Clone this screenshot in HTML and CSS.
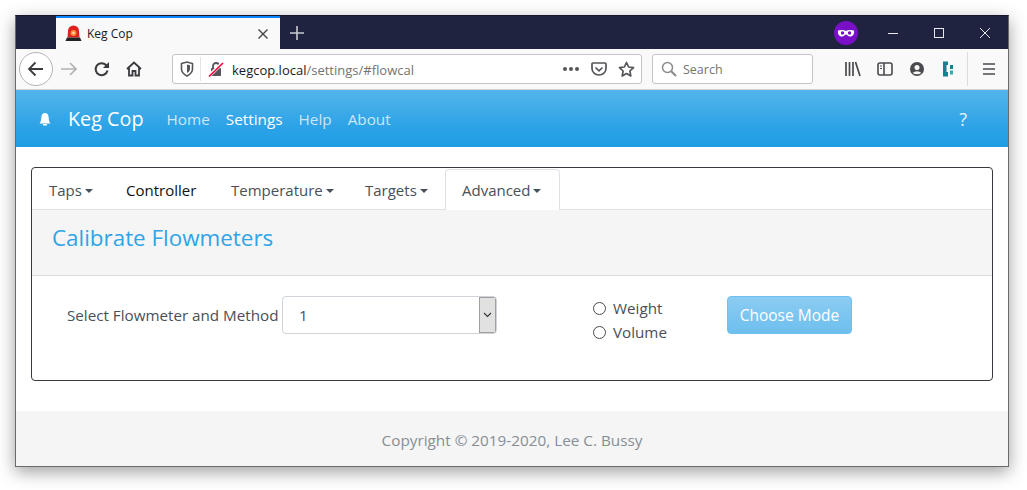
FILE: index.html
```html
<!DOCTYPE html>
<html lang="en">
<head>
  <meta charset="UTF-8">
  <title>Keg Cop</title>
  <link rel="stylesheet" href="styles.css">
</head>
<body>

  <div class="window">

    <div class="tabbar">
      <div class="tab">
        <svg class="tab-icon" width="17" height="17" viewBox="0 0 17 17">
          <path d="M2.500 12.500 L3 6 a5.500 5.500 0 0 1 11 0 L14.500 12.500 Z" fill="#e0201c"/>
          <circle cx="8.500" cy="8" r="3" fill="#ff8a3c"/>
          <circle cx="8.500" cy="8" r="1.300" fill="#ffd8a8"/>
          <path d="M0.500 16 L2 12.500 H15 L16.500 16 Z" fill="#222"/>
        </svg>
        <span class="tab-title">Keg Cop</span>
        <svg class="tab-close" width="12" height="12" viewBox="0 0 12 12">
          <path d="M1.500 1.500 L10.500 10.500 M10.500 1.500 L1.500 10.500" stroke="#444" stroke-width="1.400"/>
        </svg>
      </div>
      <svg class="new-tab" width="14" height="14" viewBox="0 0 14 14">
        <path d="M7 0 V14 M0 7 H14" stroke="#c9cad2" stroke-width="1.600"/>
      </svg>
      <div class="tabbar-right">
        <svg class="mask" width="24" height="24" viewBox="0 0 24 24">
          <circle cx="12" cy="12" r="12" fill="#7a0fc8"/>
          <path d="M4 9.500 C7 8.500 10 9 12 10 C14 9 17 8.500 20 9.500 C20.500 13 19 15.500 16 15.500 C14 15.500 13 13.500 12 13.500 C11 13.500 10 15.500 8 15.500 C5 15.500 3.500 13 4 9.500 Z" fill="#fff"/>
          <circle cx="8.500" cy="12" r="1.700" fill="#7a0fc8"/>
          <circle cx="15.500" cy="12" r="1.700" fill="#7a0fc8"/>
        </svg>
        <div class="win-buttons">
          <svg width="46" height="12" viewBox="0 0 46 12"><path d="M18 6.500 H28" stroke="#e8e8ee"/></svg>
          <svg width="46" height="12" viewBox="0 0 46 12"><rect x="18.500" y="1.500" width="9" height="9" fill="none" stroke="#e8e8ee"/></svg>
          <svg width="46" height="12" viewBox="0 0 46 12"><path d="M18 1 L28 11 M28 1 L18 11" stroke="#e8e8ee"/></svg>
        </div>
      </div>
    </div>

    <div class="toolbar">
      <div class="back-btn">
        <svg width="18" height="18" viewBox="0 0 18 18">
          <path d="M16 9 H2 M8.500 2.500 L2 9 L8.500 15.500" fill="none" stroke="#3b3b3f" stroke-width="1.800"/>
        </svg>
      </div>
      <svg class="tool forward" width="16" height="16" viewBox="0 0 16 16">
        <path d="M0 8 H15 M9 2 L15 8 L9 14" fill="none" stroke="#b1b1b3" stroke-width="1.600"/>
      </svg>
      <svg class="tool reload" width="16" height="16" viewBox="0 0 16 16">
        <path d="M13.500 9.500 A6 6 0 1 1 12 4 L14 6" fill="none" stroke="#3b3b3f" stroke-width="2"/>
        <path d="M15 1 V7 H9 Z" fill="#3b3b3f"/>
      </svg>
      <svg class="tool home" width="16" height="16" viewBox="0 0 16 16">
        <path d="M1 8 L8 1.500 L15 8 M3 6.500 V14.500 H6.500 V10 H9.500 V14.500 H13 V6.500" fill="none" stroke="#3b3b3f" stroke-width="1.800"/>
      </svg>

      <div class="urlbar">
        <svg class="shield" width="14" height="16" viewBox="0 0 14 16">
          <path d="M1.500 2.500 L7 1 L12.500 2.500 V8 C12.500 11.500 10 13.500 7 15 C4 13.500 1.500 11.500 1.500 8 Z" fill="none" stroke="#55555a" stroke-width="1.600"/>
          <path d="M7 3.500 L10 4.300 V8 C10 10 8.500 11.200 7 12 Z" fill="#55555a"/>
        </svg>
        <span class="url-sep"></span>
        <svg class="lock" width="16" height="16" viewBox="0 0 16 16">
          <path d="M5 7 V5 a3 3 0 0 1 6 0 V7" fill="none" stroke="#55555a" stroke-width="1.800"/>
          <rect x="3" y="7" width="10" height="8" rx="1" fill="#55555a"/>
          <path d="M1 15 L14.500 2" stroke="#fff" stroke-width="3.500"/>
          <path d="M1 15.500 L15 2" stroke="#ff0039" stroke-width="1.600"/>
        </svg>
        <span class="url"><span class="url-host">kegcop.local</span>/settings/#flowcal</span>
        <span class="dots">
          <i></i><i></i><i></i>
        </span>
        <svg class="pocket" width="16" height="16" viewBox="0 0 16 16">
          <path d="M1 3 Q1 2 2 2 H14 Q15 2 15 3 V7.500 A7 6.500 0 0 1 1 7.500 Z" fill="none" stroke="#55555a" stroke-width="1.700"/>
          <path d="M4.500 6.500 L8 9.800 L11.500 6.500" fill="none" stroke="#55555a" stroke-width="1.700"/>
        </svg>
        <svg class="star" width="17" height="17" viewBox="0 0 17 17">
          <path d="M8.500 1.500 L10.600 6 L15.500 6.600 L11.900 10 L12.800 15 L8.500 12.500 L4.200 15 L5.100 10 L1.500 6.600 L6.400 6 Z" fill="none" stroke="#55555a" stroke-width="1.700" stroke-linejoin="round"/>
        </svg>
      </div>

      <div class="searchbar">
        <svg width="16" height="16" viewBox="0 0 16 16">
          <circle cx="6.500" cy="6.500" r="5" fill="none" stroke="#8a8a8e" stroke-width="1.500"/>
          <path d="M10.200 10.200 L15 15" stroke="#8a8a8e" stroke-width="2"/>
        </svg>
        <span>Search</span>
      </div>

      <div class="toolbar-right">
        <svg width="16" height="16" viewBox="0 0 16 16">
          <path d="M1 1 V15 M4.500 1 V15 M8 1 V15 M10.500 1 L15 15" fill="none" stroke="#4a4a4f" stroke-width="1.700"/>
        </svg>
        <svg width="16" height="16" viewBox="0 0 16 16">
          <rect x="1" y="2" width="14" height="12" rx="2" fill="none" stroke="#4a4a4f" stroke-width="1.600"/>
          <path d="M7 2 V14" stroke="#4a4a4f" stroke-width="1.600"/>
          <path d="M3 5 H5 M3 7.500 H5" stroke="#4a4a4f"/>
        </svg>
        <svg width="16" height="16" viewBox="0 0 16 16">
          <circle cx="8" cy="8" r="7" fill="#4a4a4f"/>
          <circle cx="8" cy="6.500" r="2.500" fill="#f9f9fa"/>
          <path d="M3.500 12 Q8 8.500 12.500 12 Q8 14.500 3.500 12 Z" fill="#f9f9fa"/>
        </svg>
        <svg width="14" height="16" viewBox="0 0 14 16">
          <path d="M2 0.500 H7 V4 H5.500 V11 H7 V15.500 H2 Z" fill="#1b7f93"/>
          <rect x="9" y="4" width="3" height="4" fill="#1b7f93"/>
          <rect x="9" y="9.500" width="3" height="4" fill="#3aa6ba"/>
        </svg>
        <span class="toolbar-sep"></span>
        <svg width="14" height="14" viewBox="0 0 14 14">
          <path d="M1 2 H13 M1 7 H13 M1 12 H13" stroke="#4a4a4f" stroke-width="1.700"/>
        </svg>
      </div>
    </div>

    <nav class="navbar">
      <svg class="bell" width="12" height="14" viewBox="0 0 12 14">
        <path d="M0.500 11.500 C2 10 2.200 7 2.400 5 C2.600 2.500 4 1 6 1 C8 1 9.400 2.500 9.600 5 C9.800 7 10 10 11.500 11.500 Z" fill="#fff"/>
        <rect x="4" y="12" width="4" height="1.500" fill="#fff"/>
      </svg>
      <a class="brand" href="#">Keg Cop</a>
      <a href="#">Home</a>
      <a class="active" href="#">Settings</a>
      <a href="#">Help</a>
      <a href="#">About</a>
      <a class="help" href="#">?</a>
    </nav>

    <main class="content">
      <div class="card">
        <ul class="tabs">
          <li class="caret">Taps</li>
          <li class="plain">Controller</li>
          <li class="caret">Temperature</li>
          <li class="caret">Targets</li>
          <li class="caret current">Advanced</li>
        </ul>
        <div class="card-header">
          <h4>Calibrate Flowmeters</h4>
        </div>
        <form class="card-body">
          <label class="select-label" for="flowmeter">Select Flowmeter and Method</label>
          <div class="select-box" id="flowmeter">
            <span>1</span>
            <span class="select-arrow">
              <svg width="9" height="6" viewBox="0 0 9 6"><path d="M1 1 L4.500 4.500 L8 1" fill="none" stroke="#333" stroke-width="1.100"/></svg>
            </span>
          </div>
          <div class="radios">
            <label><i class="radio"></i>Weight</label>
            <label><i class="radio"></i>Volume</label>
          </div>
          <button type="button" class="btn">Choose Mode</button>
        </form>
      </div>
    </main>

    <footer>Copyright © 2019-2020, Lee C. Bussy</footer>
  </div>

</body>
</html>
```

FILE: styles.css
```css
html {
  height: 100%;
}

body {
  font-family: "Open Sans", "Noto Sans", sans-serif;
  background-color: #fff;
  margin: 0;
  padding: 15px 18px 23px 15px;
  height: 100%;
  box-sizing: border-box;
  overflow: hidden;
}

.window {
  width: 994px;
  height: 452px;
  box-sizing: border-box;
  border: 1px solid #6a6a6a;
  border-top-color: #15172b;
  box-shadow: 0 5px 16px rgba(0, 0, 0, 0.38);
  display: flex;
  flex-direction: column;
  background: #fff;
}

/* browser chrome */
.tabbar {
  height: 33px;
  flex: none;
  background-color: #20233f;
  display: flex;
  align-items: center;
  padding-left: 40px;
}

.tab {
  width: 224px;
  height: 33px;
  box-sizing: border-box;
  background-color: #f9f9fa;
  border-top: 2px solid #0a84ff;
  display: flex;
  align-items: center;
  padding: 0 11px 0 9px;
}

.tab-title {
  font-size: 12px;
  margin-left: 5px;
  color: #1a1a1a;
  flex: 1;
}

.new-tab {
  margin-left: 10px;
}

.tabbar-right {
  margin-left: auto;
  display: flex;
  align-items: center;
}

.mask {
  margin-right: 12px;
}

.win-buttons {
  display: flex;
}

.toolbar {
  height: 41px;
  flex: none;
  background-color: #f9f9fa;
  border-bottom: 1px solid #d2d2d4;
  box-sizing: border-box;
  display: flex;
  align-items: center;
  padding-left: 3px;
}

.back-btn {
  width: 34px;
  height: 34px;
  flex: none;
  box-sizing: border-box;
  border: 1px solid #b5b5b7;
  border-radius: 50%;
  background: #fff;
  display: flex;
  align-items: center;
  justify-content: center;
}

.tool {
  flex: none;
}

.forward { margin-left: 8px; }
.reload { margin-left: 17px; }
.home { margin-left: 16px; }

.urlbar {
  width: 470px;
  height: 30px;
  margin-left: 30px;
  box-sizing: border-box;
  background: #fff;
  border: 1px solid #c4c4c6;
  border-radius: 3px;
  display: flex;
  align-items: center;
  padding-left: 7px;
  font-size: 13px;
  color: #737373;
}

.url-sep {
  width: 1px;
  height: 24px;
  background: #e3e3e5;
  margin: 0 7px 0 6px;
}

.url {
  margin-left: 8px;
  padding-top: 1px;
  flex: 1;
}

.url-host {
  color: #1a1a1a;
}

.dots {
  display: flex;
  gap: 2px;
}

.dots i {
  width: 4px;
  height: 4px;
  border-radius: 50%;
  background: #55555a;
}

.pocket { margin-left: 12px; }
.star { margin: 0 6px 0 11px; }

.searchbar {
  width: 161px;
  height: 30px;
  margin-left: 10px;
  box-sizing: border-box;
  background: #fff;
  border: 1px solid #c4c4c6;
  border-radius: 3px;
  display: flex;
  align-items: center;
  padding-left: 8px;
  gap: 6px;
  font-size: 12.500px;
  color: #737373;
}

.toolbar-right {
  margin-left: 32px;
  display: flex;
  align-items: center;
  gap: 16px;
}

.toolbar-sep {
  width: 1px;
  height: 34px;
  background: #dcdcde;
  margin: 0 -2px 0 -4px;
}

/* page */
.navbar {
  height: 57px;
  flex: none;
  background-image: linear-gradient(#54b4eb, #2fa4e7 60%, #1d9ce5);
  display: flex;
  align-items: center;
  padding-left: 23px;
  font-size: 15.300px;
}

.navbar a {
  color: rgba(255, 255, 255, 0.75);
  text-decoration: none;
  margin-right: 16px;
}

.navbar a.active {
  color: #fff;
}

.navbar a.brand {
  color: #fff;
  font-size: 19.800px;
  margin: 0 23px 0 17px;
}

.navbar a.help {
  color: rgba(255, 255, 255, 0.9);
  margin: 0 41px 0 auto;
  font-size: 18px;
}

.content {
  flex: 1;
  padding: 20px 15px 0;
}

.card {
  height: 214px;
  box-sizing: border-box;
  border: 1px solid #343a40;
  border-radius: 4px;
  display: flex;
  flex-direction: column;
}

.tabs {
  list-style: none;
  margin: 0;
  padding: 0;
  height: 42px;
  flex: none;
  box-sizing: border-box;
  border-bottom: 1px solid #dee2e6;
  display: flex;
  font-size: 15px;
  color: #495057;
}

.tabs li {
  height: 42px;
  box-sizing: border-box;
  padding-left: 17px;
  line-height: 44px;
  white-space: nowrap;
}

.tabs li:nth-child(1) { width: 77px; }
.tabs li:nth-child(2) { width: 105px; }
.tabs li:nth-child(3) { width: 134px; }
.tabs li:nth-child(4) { width: 97px; }

.tabs li.plain {
  color: #111;
}

.tabs li.caret::after {
  content: "";
  display: inline-block;
  margin-left: 3px;
  vertical-align: 3px;
  border-top: 4px solid #495057;
  border-left: 4px solid transparent;
  border-right: 4px solid transparent;
}

.tabs li.current {
  width: 115px;
  height: 41px;
  margin-top: 1px;
  background: #fff;
  border: 1px solid #dee2e6;
  border-bottom: none;
  border-radius: 4px 4px 0 0;
  padding-left: 16px;
  line-height: 40px;
}

.card-header {
  height: 66px;
  flex: none;
  box-sizing: border-box;
  background: #f5f5f5;
  border-bottom: 1px solid #dcdcdc;
  padding: 12px 20px 0;
}

.card-header h4 {
  margin: 0;
  font-size: 22.400px;
  font-weight: 400;
  line-height: 32px;
  color: #2fa4e7;
}

.card-body {
  display: flex;
  align-items: flex-start;
  padding: 20px 0 0 35px;
  font-size: 15.200px;
  color: #495057;
}

.select-label {
  line-height: 38px;
  width: 212px;
  margin-right: 3px;
  white-space: nowrap;
}

.select-box {
  width: 215px;
  height: 38px;
  box-sizing: border-box;
  border: 1px solid #ced4da;
  border-radius: 4px;
  display: flex;
  align-items: center;
  justify-content: space-between;
  padding-left: 16px;
  overflow: hidden;
}

.select-arrow {
  width: 17px;
  height: 36px;
  box-sizing: border-box;
  background: #e1e1e1;
  border: 1px solid #a0a0a0;
  display: flex;
  align-items: center;
  justify-content: center;
}

.radios {
  display: flex;
  flex-direction: column;
  margin-left: 96px;
}

.radios label {
  display: flex;
  align-items: center;
  height: 24px;
  line-height: 24px;
}

.radio {
  width: 13px;
  height: 13px;
  box-sizing: border-box;
  border: 1px solid #4a4a4f;
  border-radius: 50%;
  background: #fff;
  margin-right: 7px;
}

.btn {
  margin-left: 60px;
  width: 125px;
  height: 38px;
  padding: 0;
  font-family: inherit;
  font-size: 15.500px;
  color: #fff;
  border: 1px solid #70c0ef;
  border-radius: 4px;
  background-image: linear-gradient(#8cccf2, #6dbfee);
}

footer {
  height: 55px;
  flex: none;
  background: #f5f5f5;
  text-align: center;
  line-height: 58px;
  font-size: 15.300px;
  color: #868e96;
}
```
